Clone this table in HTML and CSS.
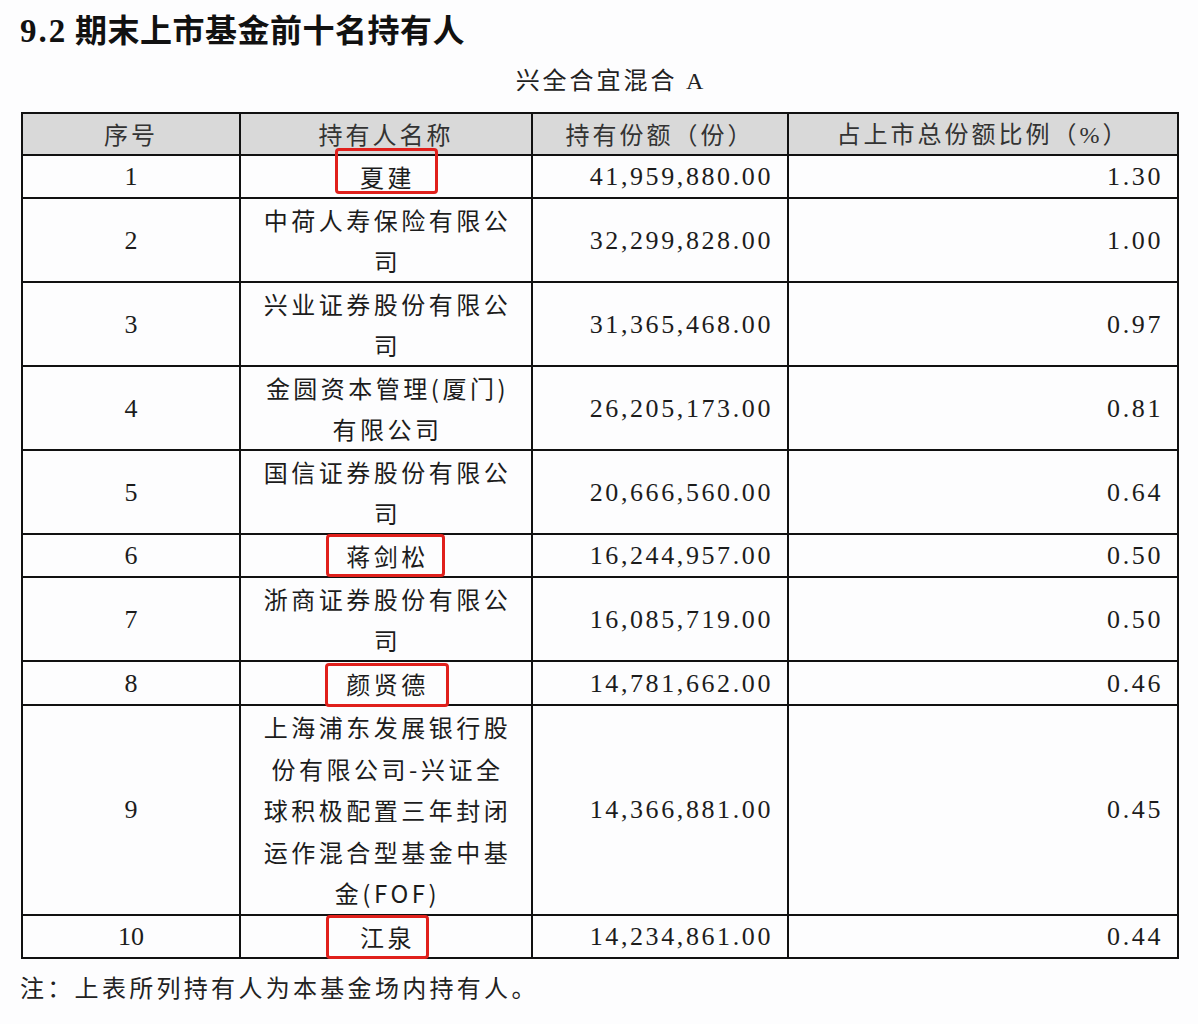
FILE: index.html
```html
<!DOCTYPE html>
<html lang="zh">
<head>
<meta charset="utf-8">
<title>9.2 期末上市基金前十名持有人</title>
<link rel="stylesheet" href="styles.css">
</head>
<body>
<div class="page">
  <h1 class="title"><span class="num">9.2</span> 期末上市基金前十名持有人</h1>
  <div class="subtitle">兴全合宜混合 <span class="latin">A</span></div>
  <table class="holders">
    <colgroup>
      <col class="c1"><col class="c2"><col class="c3"><col class="c4">
    </colgroup>
    <thead>
      <tr><th>序号</th><th>持有人名称</th><th>持有份额（份）</th><th>占上市总份额比例（<span class="latin">%</span>）</th></tr>
    </thead>
    <tbody>
      <tr><td class="idx">1</td><td class="name"><span class="mark m1">夏建</span></td><td class="n">41,959,880.00</td><td class="n">1.30</td></tr>
      <tr><td class="idx">2</td><td class="name">中荷人寿保险有限公<br>司</td><td class="n">32,299,828.00</td><td class="n">1.00</td></tr>
      <tr><td class="idx">3</td><td class="name">兴业证券股份有限公<br>司</td><td class="n">31,365,468.00</td><td class="n">0.97</td></tr>
      <tr><td class="idx">4</td><td class="name">金圆资本管理(厦门)<br>有限公司</td><td class="n">26,205,173.00</td><td class="n">0.81</td></tr>
      <tr><td class="idx">5</td><td class="name">国信证券股份有限公<br>司</td><td class="n">20,666,560.00</td><td class="n">0.64</td></tr>
      <tr><td class="idx">6</td><td class="name"><span class="mark m6">蒋剑松</span></td><td class="n">16,244,957.00</td><td class="n">0.50</td></tr>
      <tr><td class="idx">7</td><td class="name">浙商证券股份有限公<br>司</td><td class="n">16,085,719.00</td><td class="n">0.50</td></tr>
      <tr class="single"><td class="idx">8</td><td class="name"><span class="mark m8">颜贤德</span></td><td class="n">14,781,662.00</td><td class="n">0.46</td></tr>
      <tr class="tall"><td class="idx">9</td><td class="name">上海浦东发展银行股<br>份有限公司-兴证全<br>球积极配置三年封闭<br>运作混合型基金中基<br>金(FOF)</td><td class="n">14,366,881.00</td><td class="n">0.45</td></tr>
      <tr><td class="idx">10</td><td class="name"><span class="mark m10">江泉</span></td><td class="n">14,234,861.00</td><td class="n">0.44</td></tr>
    </tbody>
  </table>
  <p class="note">注：上表所列持有人为本基金场内持有人。</p>
</div>
</body>
</html>
```

FILE: styles.css
```css
html, body {
  margin: 0;
  padding: 0;
  background: #fdfdfe;
}

.page {
  width: 1198px;
  height: 1024px;
  box-sizing: border-box;
  padding: 8px 0 0 20px;
  color: #1c1c1c;
  font-family: "Noto Sans CJK SC", "Noto Sans", sans-serif;
}

.title {
  margin: 0;
  font-size: 32px;
  line-height: 40px;
  font-weight: 700;
  color: #111;
  letter-spacing: 0.5px;
}

.title .num {
  font-family: "Liberation Serif", serif;
  font-weight: 700;
  font-size: 33px;
  letter-spacing: 2px;
}

.subtitle {
  margin-top: 10px;
  padding-left: 14px;
  width: 1154px;
  text-align: center;
  font-size: 24px;
  line-height: 36px;
  letter-spacing: 3px;
  color: #222;
}

.latin {
  font-family: "Liberation Serif", serif;
}

.holders {
  margin-top: 13px;
  margin-left: 1px;
  border-collapse: collapse;
  table-layout: fixed;
  width: 1156px;
  border: 2px solid #111;
}

.c1 { width: 218px; }
.c2 { width: 292px; }
.c3 { width: 256px; }
.c4 { width: 390px; }

.holders th,
.holders td {
  border: 2px solid #111;
  padding: 0;
  font-weight: 400;
  font-size: 24px;
  line-height: 41px;
  vertical-align: middle;
}

.holders tr.single td {
  height: 42px;
}

.holders tr.tall td {
  line-height: 41.6px;
}

.holders th {
  background: #d9d9d9;
  color: #333;
  height: 38px;
  line-height: 38px;
  letter-spacing: 3px;
  text-align: center;
}

.holders td.idx {
  text-align: center;
  font-family: "Liberation Serif", serif;
  font-size: 26px;
}

.holders td.name {
  text-align: center;
  letter-spacing: 3.5px;
  padding-left: 3px;
}

.holders td.n {
  text-align: right;
  padding-right: 14px;
  font-family: "Liberation Serif", serif;
  font-size: 26px;
  letter-spacing: 2.6px;
}

.mark {
  position: relative;
  display: inline-block;
}

.mark::after {
  content: "";
  position: absolute;
  top: -2px;
  bottom: -2px;
  left: -21px;
  right: -19px;
  border: 3px solid #e0201c;
  border-radius: 4px;
}

.mark.m1::after { top: -8px; bottom: 3px; left: -25px; right: -23px; }
.mark.m6::after { top: -1px; bottom: -1px; left: -20px; right: -16px; }
.mark.m8::after { top: 0; bottom: -3px; left: -21px; right: -20px; }
.mark.m10::after { top: -1px; bottom: -2px; left: -34px; right: -14px; }

.note {
  margin: 10px 0 0;
  font-size: 24px;
  line-height: 36px;
  letter-spacing: 3.3px;
  color: #222;
}
```
